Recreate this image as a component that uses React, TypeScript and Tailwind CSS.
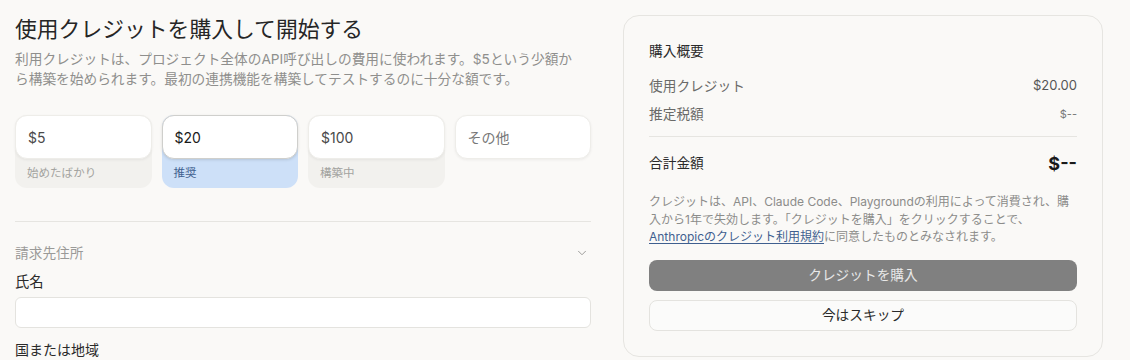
import { ChevronDown } from "lucide-react";

const AMOUNTS = [
  { value: "$5", label: "始めたばかり", selected: false },
  { value: "$20", label: "推奨", selected: true },
  { value: "$100", label: "構築中", selected: false },
];

function AmountCard({ value, label, selected }: { value: string; label: string; selected: boolean }) {
  return (
    <div className={selected ? "rounded-xl bg-[#cde0f8]" : "rounded-xl bg-[#f2f1ee]"}>
      <div
        className={
          selected
            ? "h-[44px] rounded-xl bg-white border border-[#cfcfcc] shadow-[0_1px_3px_rgba(0,0,0,0.12)] flex items-center px-3 text-[14px] text-[#1a1a1a]"
            : "h-[44px] rounded-xl bg-white border border-[#eeede9] shadow-[0_1px_3px_rgba(0,0,0,0.06)] flex items-center px-3 text-[14px] text-[#4a4a4a]"
        }
      >
        {value}
      </div>
      <div className={selected ? "h-[29px] flex items-center px-3 text-[11.5px] text-[#3f5f8f]" : "h-[29px] flex items-center px-3 text-[11.5px] text-[#a3a3a0]"}>
        {label}
      </div>
    </div>
  );
}

export default function App() {
  return (
    <div className="min-h-[360px] bg-[#faf9f7] font-['Inter','Noto_Sans_CJK_JP',sans-serif] flex gap-[32px] pl-[15px] pt-[15px] overflow-hidden">
      {/* Left: amount + billing form */}
      <div className="w-[576px] shrink-0">
        <h1 className="text-[21.8px] leading-[28px] text-[#262626] font-normal">使用クレジットを購入して開始する</h1>
        <p className="mt-[6px] text-[13.7px] leading-[20px] text-[#8f8f8d] whitespace-nowrap">
          <span className="block">利用クレジットは、プロジェクト全体のAPI呼び出しの費用に使われます。$5という少額か</span>
          <span className="block">ら構築を始められます。最初の連携機能を構築してテストするのに十分な額です。</span>
        </p>

        <div className="mt-[26px] grid grid-cols-4 gap-[10px] items-start">
          {AMOUNTS.map((a) => (
            <AmountCard key={a.value} {...a} />
          ))}
          <div className="h-[44px] rounded-xl bg-white border border-[#eeede9] shadow-[0_1px_3px_rgba(0,0,0,0.06)] flex items-center px-3 text-[14px] text-[#777]">
            その他
          </div>
        </div>

        <div className="mt-[33px] border-t border-[#e6e5e1]" />

        <div className="mt-[20px] flex items-center justify-between h-[22px]">
          <span className="text-[13.7px] text-[#9a9a98]">請求先住所</span>
          <ChevronDown size={14} strokeWidth={1.5} className="text-[#8f8f8d] mr-[2px]" />
        </div>

        <div className="mt-[8px] text-[14.3px] leading-[20px] text-[#2a2a2a]">氏名</div>
        <div className="mt-[5px] h-[31px] rounded-md bg-white border border-[#e4e3df]" />
        <div className="mt-[12px] text-[14px] leading-[20px] text-[#2a2a2a]">国または地域</div>
      </div>

      {/* Right: purchase summary */}
      <div className="w-[480px] shrink-0 h-[342px] rounded-[16px] border border-[#e6e5e1] bg-[#faf9f7] px-[25px] pt-[24px]">
        <div className="text-[13.7px] leading-[22px] text-[#2a2a2a]">購入概要</div>

        <div className="mt-[14px] flex justify-between items-center h-[20px] text-[13.7px] text-[#6a6a68]">
          <span>使用クレジット</span>
          <span className="text-[13px] text-[#555]">$20.00</span>
        </div>
        <div className="mt-[8px] flex justify-between items-center h-[20px] text-[13.7px] text-[#6a6a68]">
          <span>推定税額</span>
          <span className="text-[11px] text-[#777]">$--</span>
        </div>

        <div className="mt-[12px] border-t border-[#e6e5e1]" />

        <div className="mt-[14px] flex justify-between items-center h-[24px]">
          <span className="text-[13.7px] text-[#2a2a2a]">合計金額</span>
          <span className="text-[18px] font-bold text-[#1a1a1a]">$--</span>
        </div>

        <p className="mt-[18px] text-[12px] leading-[17.5px] text-[#8c8c8a]">
          クレジットは、API、Claude Code、Playgroundの利用によって消費され、購入から1年で失効します。「クレジットを購入」をクリックすることで、
          <br />
          <span className="text-[#3f5f8f] underline underline-offset-2 decoration-[#3f5f8f]">Anthropicのクレジット利用規約</span>
          に同意したものとみなされます。
        </p>

        <button className="mt-[14px] w-full h-[31px] rounded-lg bg-[#808080] text-[13.7px] text-[#e8e8e8]">
          クレジットを購入
        </button>
        <button className="mt-[9px] w-full h-[31px] rounded-lg bg-[#fbfbfa] border border-[#e4e3df] text-[13.7px] text-[#2a2a2a]">
          今はスキップ
        </button>
      </div>
    </div>
  );
}
